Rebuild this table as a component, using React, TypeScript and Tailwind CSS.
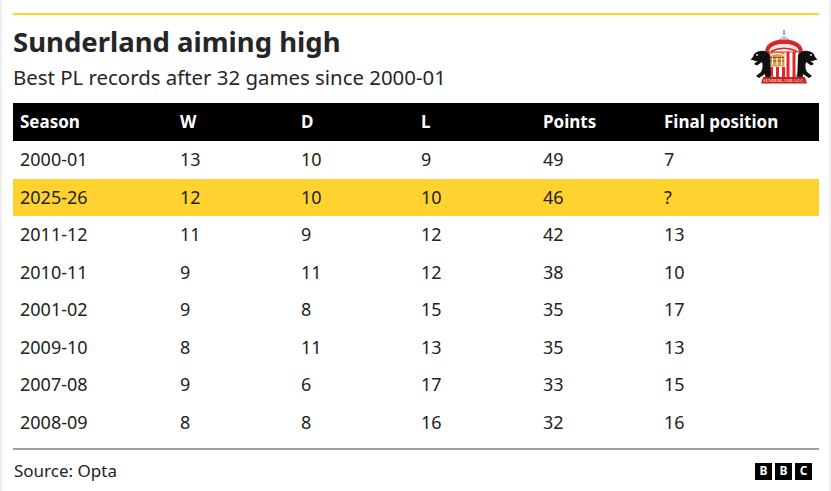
import React from 'react'

const rows = [
  { season: '2000-01', w: 13, d: 10, l: 9, pts: 49, pos: '7' },
  { season: '2025-26', w: 12, d: 10, l: 10, pts: 46, pos: '?', highlight: true },
  { season: '2011-12', w: 11, d: 9, l: 12, pts: 42, pos: '13' },
  { season: '2010-11', w: 9, d: 11, l: 12, pts: 38, pos: '10' },
  { season: '2001-02', w: 9, d: 8, l: 15, pts: 35, pos: '17' },
  { season: '2009-10', w: 8, d: 11, l: 13, pts: 35, pos: '13' },
  { season: '2007-08', w: 9, d: 6, l: 17, pts: 33, pos: '15' },
  { season: '2008-09', w: 8, d: 8, l: 16, pts: 32, pos: '16' },
]

const cols = 'grid grid-cols-[160px_121px_120px_122px_121px_162px]'

const lionPath =
  'M21 25 Q17 20 11 21 Q5 22 4 27 L1.5 29.5 L5 30.5 Q7 31.5 9 30.5 L5 34 L8 35.5 L13 32 Q14.5 38 12 42 L7 46 L10 48 L16 44 L16.5 49 L22 49 L21.5 40 Z'

function Crest() {
  return (
    <svg viewBox="0 0 70 56" className="h-[56px] w-[70px]" aria-hidden="true">
      {/* finial + dome */}
      <rect x="34.3" y="0" width="1.4" height="5" fill="#8a7a7a" />
      <path d="M29 11 Q35 2 41 11 Z" fill="#a0969a" />
      <path d="M31 11 L39 11 L38 7.5 L32 7.5 Z" fill="#d6cfd0" />
      {/* red crown arch */}
      <path d="M16 23 Q16 10 35 9.5 Q54 10 54 23 L50 23 Q50 14.5 35 14 Q20 14.5 20 23 Z" fill="#d9262b" />
      <path d="M20 23 Q20 14.5 35 14 Q50 14.5 50 23 Z" fill="#f6e6e6" />
      <path d="M22 21.5 Q35 15 48 21.5" stroke="#d9262b" strokeWidth="1.4" fill="none" />
      {/* shield */}
      <clipPath id="shield">
        <path d="M20 22 L50 22 L50 40 Q50 48 35 51 Q20 48 20 40 Z" />
      </clipPath>
      <path d="M20 22 L50 22 L50 40 Q50 48 35 51 Q20 48 20 40 Z" fill="#ffffff" />
      <g clipPath="url(#shield)">
        <rect x="37.5" y="22" width="3" height="30" fill="#e2262b" />
        <rect x="43.5" y="22" width="3" height="30" fill="#e2262b" />
        <rect x="21" y="37" width="3" height="16" fill="#e2262b" />
        <rect x="27" y="37" width="3" height="16" fill="#e2262b" />
        <rect x="33" y="37" width="3" height="16" fill="#e2262b" />
        <rect x="20" y="22" width="15.5" height="14.5" fill="#d9a24e" />
        <path d="M21 27.5 L35 27.5 M21 31 L35 31" stroke="#a1341e" strokeWidth="1" />
        <path d="M23.5 35 L23.5 27.5 M28 35 L28 27.5 M32.5 35 L32.5 27.5" stroke="#ffffff" strokeWidth="1" />
        <path d="M21 25.5 Q28 21.5 35 25.5" stroke="#ffffff" strokeWidth="1" fill="none" />
      </g>
      <path d="M20 22 L50 22 L50 40 Q50 48 35 51 Q20 48 20 40 Z" fill="none" stroke="#b81e24" strokeWidth="0.8" />
      {/* lions */}
      <path d={lionPath} fill="#111111" />
      <path d={lionPath} fill="#111111" transform="translate(70 0) scale(-1 1)" />
      <circle cx="8" cy="25" r="0.9" fill="#ffffff" />
      <circle cx="62" cy="25" r="0.9" fill="#ffffff" />
      {/* banner */}
      <path d="M14 47 L56 47 L58 53.5 L12 53.5 Z" fill="#c8202a" />
      <text
        x="35"
        y="52.3"
        textAnchor="middle"
        fontSize="4.2"
        fill="#f5d9a0"
        fontFamily="Liberation Serif, serif"
        fontWeight="bold"
      >
        SUNDERLAND A.F.C.
      </text>
    </svg>
  )
}

function BbcLogo() {
  return (
    <div className="flex gap-[3px]">
      {['B', 'B', 'C'].map((ch, i) => (
        <span
          key={i}
          className="flex h-[17px] w-[17px] items-center justify-center bg-black text-[12px] font-bold leading-none text-white"
        >
          {ch}
        </span>
      ))}
    </div>
  )
}

export default function App() {
  return (
    <div className="h-[491px] w-[831px] bg-white" style={{ fontFamily: '"Noto Sans", "Open Sans", sans-serif' }}>
      <div className="flex h-full border-x-2 border-[#eeeeee]">
        <div className="ml-[11px] w-[806px] pt-[13px]">
          <div className="h-[2px] bg-[#ffd230]" />
          <div className="flex h-[88px] items-start justify-between">
            <div>
              <h1 className="mt-[10px] text-[27.5px] font-bold leading-[34px] text-[#262626]">
                Sunderland aiming high
              </h1>
              <p className="mt-[5px] text-[20.4px] leading-[27px] text-[#262626]">
                Best PL records after 32 games since 2000-01
              </p>
            </div>
            <div className="mt-[15px]">
              <Crest />
            </div>
          </div>

          <div>
            <div className={`${cols} h-[38px] items-center bg-black text-[17px] font-bold text-white`}>
              {['Season', 'W', 'D', 'L', 'Points', 'Final position'].map((h) => (
                <div key={h} className="pl-[7px]">
                  {h}
                </div>
              ))}
            </div>
            {rows.map((r) => (
              <div
                key={r.season}
                className={`${cols} h-[37.5px] items-center text-[18px] text-[#222222] ${
                  r.highlight ? 'bg-[#ffd230]' : ''
                }`}
              >
                <div className="pl-[7px]">{r.season}</div>
                <div className="pl-[7px]">{r.w}</div>
                <div className="pl-[7px]">{r.d}</div>
                <div className="pl-[7px]">{r.l}</div>
                <div className="pl-[7px]">{r.pts}</div>
                <div className="pl-[7px]">{r.pos}</div>
              </div>
            ))}
          </div>

          <div className="mt-[7px] h-[2px] bg-[#a0a0a0]" />
          <div className="mt-[10px] flex items-center justify-between">
            <span className="pl-[1px] text-[17px] leading-[22px] text-[#222222]">Source: Opta</span>
            <div className="mr-[7px]">
              <BbcLogo />
            </div>
          </div>
        </div>
      </div>
    </div>
  )
}
